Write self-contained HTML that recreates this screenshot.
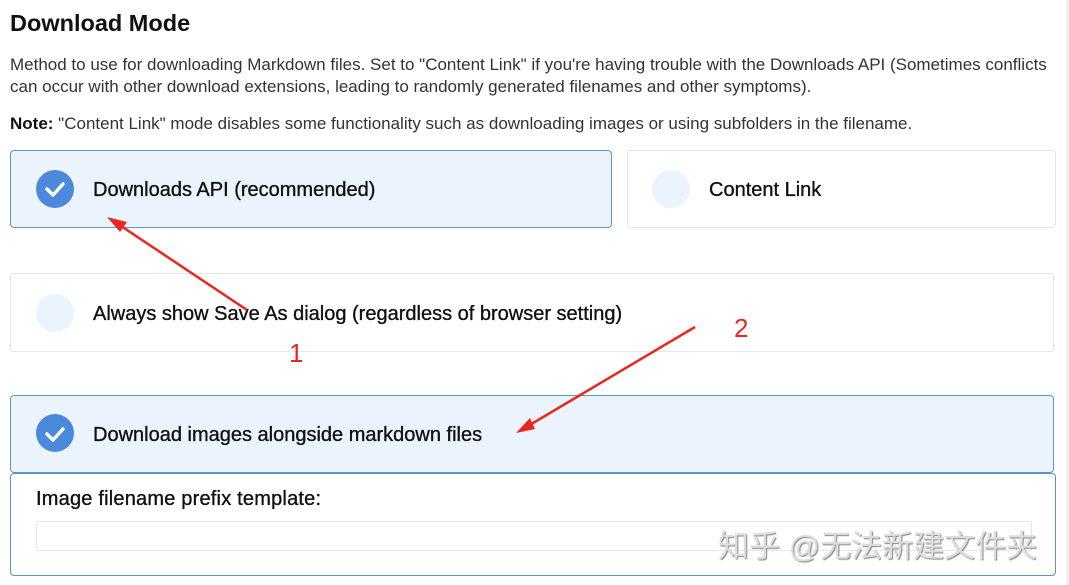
<!DOCTYPE html>
<html><head><meta charset="utf-8"><style>
body{margin:0;width:1069px;height:585px;background:#fff;font-family:"Liberation Sans",sans-serif;color:#222;position:relative;overflow:hidden}
.a{position:absolute;white-space:nowrap}
h1{position:absolute;left:10px;top:10px;margin:0;font-size:23.5px;font-weight:bold;color:#111}
.p{font-size:17px;color:#333;left:10px}
.card{position:absolute;border:1px solid #e3e6ea;border-radius:4px;background:#fff;box-sizing:border-box}
.sel{background:#ebf3fd;border-color:#5e95c8}
.c{position:absolute;width:38px;height:38px;border-radius:50%;background:#ebf3fd}
.chk{background:#4a89dc}
.lbl{position:absolute;font-size:20px;color:#111;white-space:nowrap;-webkit-text-stroke:0.35px #111}
</style></head><body>
<h1>Download Mode</h1>
<div class="a p" style="top:55px">Method to use for downloading Markdown files. Set to "Content Link" if you're having trouble with the Downloads API (Sometimes conflicts</div>
<div class="a p" style="top:77px">can occur with other download extensions, leading to randomly generated filenames and other symptoms).</div>
<div class="a p" style="top:114px"><b style="color:#111">Note:</b> "Content Link" mode disables some functionality such as downloading images or using subfolders in the filename.</div>

<div class="card sel" style="left:10px;top:150px;width:602px;height:78px"></div>
<div class="c chk" style="left:36px;top:170px"></div>
<div class="lbl" style="left:93px;top:179px">Downloads API (recommended)</div>

<div class="card" style="left:627px;top:150px;width:429px;height:78px"></div>
<div class="c" style="left:652px;top:170px"></div>
<div class="lbl" style="left:709px;top:179px">Content Link</div>

<div class="card" style="left:10px;top:273px;width:1044px;height:79px"></div>
<div class="c" style="left:36px;top:294px"></div>
<div class="lbl" style="left:93px;top:303px">Always show Save As dialog (regardless of browser setting)</div>

<div class="card sel" style="left:10px;top:395px;width:1044px;height:78px"></div>
<div class="c chk" style="left:36px;top:414px"></div>
<div class="lbl" style="left:93px;top:424px">Download images alongside markdown files</div>

<div class="card" style="left:10px;top:473px;width:1046px;height:103px;border-color:#5e95c8"></div>
<div class="lbl" style="left:36px;top:488px;font-size:20px;letter-spacing:0.2px">Image filename prefix template:</div>
<div class="card" style="left:36px;top:521px;width:996px;height:30px;border-color:#e8e8e8;border-radius:2px;background:#fff"></div>
<div class="a" style="left:718px;top:521px;font-size:31px;color:#ddd;text-shadow:1px 1px 1px #888;font-family:'Liberation Sans','Noto Sans CJK SC',sans-serif">知乎 @无法新建文件夹</div>
<div class="a" style="left:1066px;top:0;width:3px;height:585px;background:#f0f0f0"></div>

<svg width="1069" height="585" style="position:absolute;left:0;top:0">
<g fill="none" stroke="#fff" stroke-width="3.5" stroke-linecap="round" stroke-linejoin="round">
<path d="M47 189 l6 6 l10 -11"/><path d="M47 434 l6 6 l10 -11"/>
</g>
<g stroke="#e8281e" stroke-width="2.5" fill="#e8281e">
<line x1="247" y1="310" x2="118" y2="224"/>
<polygon points="107,217 127,222 120,232" stroke="none"/>
<line x1="695" y1="327" x2="528" y2="426"/>
<polygon points="516,433 530,418 535,429" stroke="none"/>
</g>
<text x="289" y="362" font-size="26" fill="#e8281e" font-family="Liberation Sans">1</text>
<text x="734" y="337" font-size="26" fill="#e8281e" font-family="Liberation Sans">2</text>
</svg>
</body></html>
